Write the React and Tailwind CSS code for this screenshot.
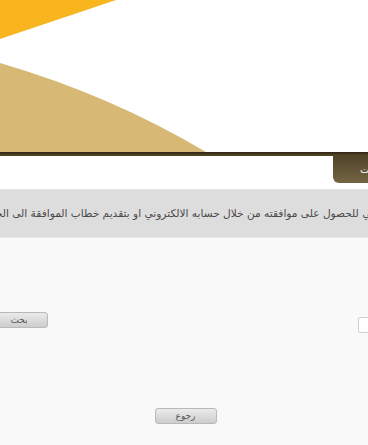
import React from "react";

const Banner = () => {
    return (
        <div className="h-[152px] w-full bg-white">
            <svg width="368" height="152" viewBox="0 0 368 152" className="block">
                <polygon points="0,0 116,0 0,39" fill="#f9b51d" />
                <path d="M0,63 Q110,95 206,152 L0,152 Z" fill="#d7b874" />
            </svg>
        </div>
    );
};

const GrayButton = ({ children, className }) => {
    return (
        <button className={"h-[16px] rounded-[3px] border border-[#b9b9b9] bg-gradient-to-b from-[#ebebeb] to-[#cdcdcd] text-[9px] leading-none text-[#555] " + className}>
            {children}
        </button>
    );
};

const App = () => {
    return (
        <div className="h-[445px] w-[368px] overflow-hidden bg-[#f9f9f9]" style={{ fontFamily: '"DejaVu Sans", sans-serif' }}>
            <Banner />
            <div className="h-[4px] bg-gradient-to-b from-[#2f2614] to-[#5a4a2c]" />
            <div className="flex h-[27px] justify-end bg-white">
                <div className="flex w-[35px] items-center rounded-bl-[6px] bg-gradient-to-b from-[#524429] to-[#736444] pl-[27px] text-[10px] text-white">
                    ت
                </div>
            </div>
            <div className="h-[7px] bg-white border-b border-[#e4e4e4]" />
            <div className="flex h-[48px] items-center overflow-hidden border-b border-[#e9e9e9] bg-[#dedddd]" dir="rtl">
                <div className="-mr-[130px] whitespace-nowrap text-[10.6px] text-[#4a4a4a]">
                    يرجى التواصل مع المالك الثاني للحصول على موافقته من خلال حسابه الالكتروني او بتقديم خطاب الموافقة الى الجهة المختصة
                </div>
            </div>
            <div className="relative flex h-[90px] items-end justify-between">
                <GrayButton className="-ml-[10px] w-[58px]">بحث</GrayButton>
                <div className="mb-[-5px] -mr-[8px] h-[16px] w-[18px] rounded-[2px] border border-[#cfcfcf] bg-white" />
            </div>
            <div className="flex justify-center pt-[80px] pl-[3px]">
                <GrayButton className="w-[62px]">رجوع</GrayButton>
            </div>
        </div>
    );
};

export default App;
